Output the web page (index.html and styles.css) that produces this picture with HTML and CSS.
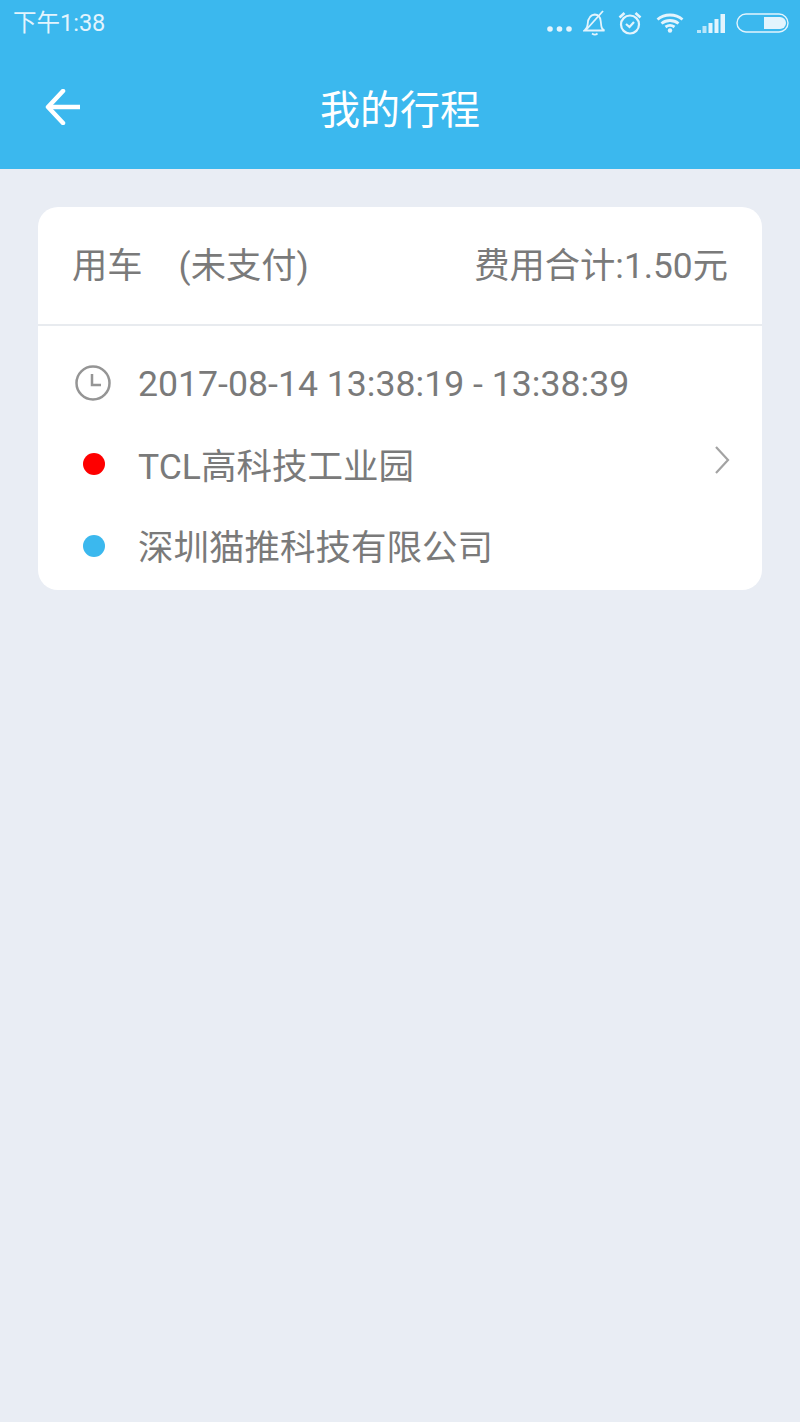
FILE: index.html
```html
<!doctype html>
<html lang="zh-CN">
<head>
  <meta charset="UTF-8" />
  <meta name="viewport" content="width=device-width, initial-scale=1.0" />
  <title>我的行程</title>
  <link rel="stylesheet" href="styles.css">
</head>
<body>
  <!-- Status bar -->
  <div class="status-bar">
    <span class="status-time">下午1:38</span>
    <div class="status-icons">
      <svg class="icon-dots" width="25" height="6" viewBox="0 0 25 6" fill="#e3f4fd"><circle cx="3" cy="3" r="2.8"/><circle cx="12.5" cy="3" r="2.8"/><circle cx="22" cy="3" r="2.8"/></svg>
      <svg class="icon-bell" width="24" height="26" viewBox="0 0 24 26" fill="none" stroke="#e3f4fd" stroke-width="1.8"><path d="M1.5 20.5c2.200-1.500 3-3 3.200-6.500.3-5 2.500-9 7-9.500 3.800.2 5.600 2.800 6 6.500l.6 5c.2 2 1 3.500 3.200 4.500z"/><path d="M9 23.500c1.800 1.300 4 1.300 5.500 0"/><path d="M3 20L20 1"/></svg>
      <svg class="icon-alarm" width="24" height="24" viewBox="0 0 24 24" fill="none" stroke="#e3f4fd" stroke-width="2.200"><circle cx="12" cy="13.500" r="9"/><path d="M8 13l3.500 3 4.500-5"/><path d="M1.500 6.500L6.500 2M22.500 6.500L17.500 2" stroke-width="2.600"/></svg>
      <svg class="icon-wifi" width="28" height="20" viewBox="0 0 28 20" fill="none" stroke="#e3f4fd" stroke-width="2.800"><path d="M1.500 6.500C8.500.5 19.500.5 26.500 6.500"/><path d="M5.500 10.500c5-4 12-4 17 0"/><path d="M9.500 14c2.800-2 6.200-2 9 0"/><circle cx="14" cy="17.500" r="2.200" fill="#e3f4fd" stroke="none"/></svg>
      <svg class="icon-signal" width="28" height="19" viewBox="0 0 28 19" fill="#e3f4fd"><path d="M0 16h4v3H0zM5.500 12h4v7h-4z" opacity="0.75"/><path d="M11.500 9h4v10h-4zM17.500 5h4v14h-4zM23.500 0h4.500v19h-4.500z"/></svg>
      <svg class="icon-battery" width="53" height="20" viewBox="0 0 53 20" fill="#e3f4fd"><rect x="1" y="1" width="51" height="18" rx="9" fill="none" stroke="#e3f4fd" stroke-width="1.400"/><path d="M28 4h16a6 6 0 0 1 0 12H28z"/></svg>
    </div>
  </div>

  <!-- Title bar -->
  <header class="title-bar">
    <svg class="back-icon" width="36" height="36" viewBox="0 0 36 36" fill="none" stroke="#fff" stroke-width="4.500" stroke-linejoin="round"><path d="M35 18H3"/><path d="M18 2L3 18l15 16" stroke-linecap="round"/></svg>
    <h1 class="page-title">我的行程</h1>
  </header>

  <!-- Trip list -->
  <main class="content">
    <section class="trip-card">
      <div class="trip-head">
        <div class="trip-type"><span>用车</span><span>(未支付)</span></div>
        <div class="trip-cost">费用合计:1.50元</div>
      </div>
      <div class="trip-body">
        <div class="trip-row">
          <span class="row-mark">
            <svg width="36" height="36" viewBox="0 0 36 36" fill="none" stroke="#959595" stroke-width="2.500"><circle cx="18" cy="18" r="16.500"/><path d="M17 9v11h9"/></svg>
          </span>
          <span class="row-text row-time">2017-08-14 13:38:19 - 13:38:39</span>
        </div>
        <div class="trip-row">
          <span class="row-mark"><i class="dot dot-start"></i></span>
          <span class="row-text">TCL高科技工业园</span>
          <svg class="row-arrow" width="16" height="28" viewBox="0 0 16 28" fill="none" stroke="#a3a3a3" stroke-width="2.200"><path d="M2 1l12 13L2 27"/></svg>
        </div>
        <div class="trip-row">
          <span class="row-mark"><i class="dot dot-end"></i></span>
          <span class="row-text">深圳猫推科技有限公司</span>
        </div>
      </div>
    </section>
  </main>
</body>
</html>
```

FILE: styles.css
```css
/* ------------------ Reset & Globals ------------------ */
* {
  margin: 0;
  padding: 0;
  box-sizing: border-box;
}
body {
  font-family: Roboto, "Noto Sans CJK SC", sans-serif;
  background: #e9edf4;
  color: #7a7a7a;
  display: flex;
  flex-direction: column;
  min-height: 100vh;
}

/* ------------------ Status Bar ------------------ */
.status-bar {
  height: 48px;
  background: #3bb8ee;
  display: flex;
  justify-content: space-between;
  align-items: center;
  padding: 0 11px 2px 13px;
  color: #e3f4fd;
}
.status-time {
  font-size: 23.5px;
  margin-bottom: 5px;
}
.status-icons {
  display: flex;
  align-items: center;
  gap: 11px;
}
.icon-dots {
  margin-top: 12px;
}
.icon-wifi {
  margin-left: 3px;
}
.icon-signal {
  margin-left: 2px;
}

/* ------------------ Title Bar ------------------ */
.title-bar {
  height: 121px;
  background: #3bb8ee;
  display: flex;
  align-items: center;
  padding: 0 0 4px 45px;
  position: relative;
}
.page-title {
  position: absolute;
  left: 0;
  right: 0;
  text-align: center;
  color: #fff;
  font-size: 40px;
  font-weight: 400;
}

/* ------------------ Trip Card ------------------ */
.content {
  flex: 1;
  padding: 38px 38px 0;
}
.trip-card {
  background: #fff;
  border-radius: 20px;
  height: 383px;
  overflow: hidden;
}
.trip-head {
  height: 119px;
  padding: 0 34px 6px;
  display: flex;
  justify-content: space-between;
  align-items: center;
  border-bottom: 2px solid #e8ebef;
  font-size: 35.3px;
}
.trip-type {
  display: flex;
  gap: 36px;
}
.trip-body {
  padding-top: 16px;
}
.trip-row {
  height: 81.500px;
  display: flex;
  align-items: center;
  position: relative;
  font-size: 35.5px;
}
.row-text {
  margin-bottom: 2px;
}
.row-time {
  font-size: 35.65px;
  margin-bottom: 0;
  margin-top: 2px;
}
.row-mark {
  width: 100px;
  padding-left: 37px;
  padding-right: 27px;
  display: flex;
  justify-content: center;
  flex-shrink: 0;
}
.dot {
  display: block;
  width: 22px;
  height: 22px;
  border-radius: 50%;
  margin-left: 1px;
}
.dot-start {
  background: #fe0000;
}
.dot-end {
  background: #3bb8ee;
}
.row-arrow {
  position: absolute;
  right: 32px;
  top: 22px;
}
```
